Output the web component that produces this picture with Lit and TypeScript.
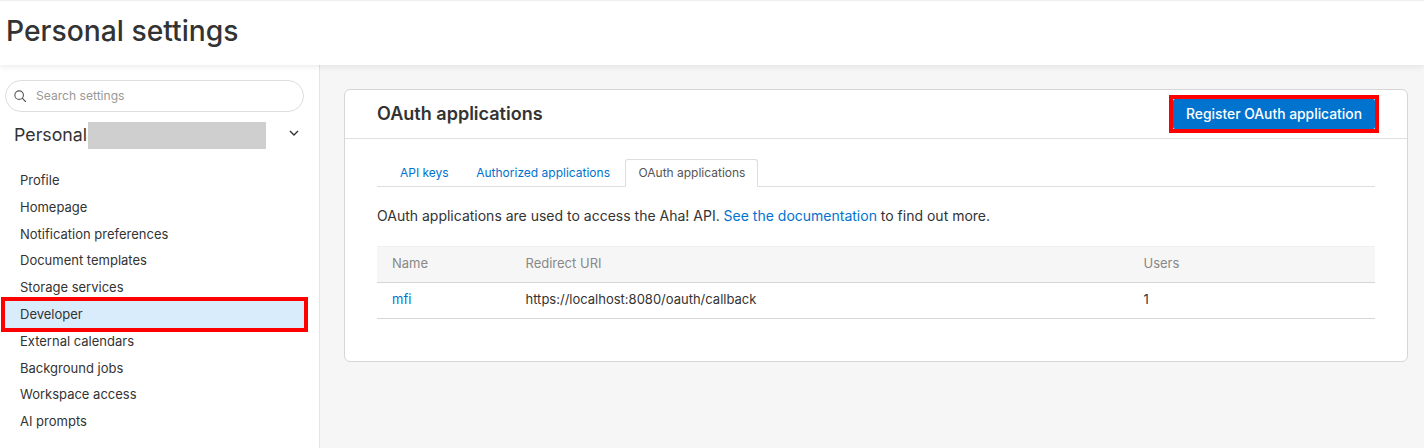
import { LitElement, html, css } from "lit";
import { customElement } from "lit/decorators.js";

const NAV = ["Profile","Homepage","Notification preferences","Document templates","Storage services","Developer","External calendars","Background jobs","Workspace access","AI prompts"];

@customElement("app-root")
export class AppRoot extends LitElement {
  static styles = css`
    :host { display: block; width: 1424px; height: 448px; overflow: hidden; font-family: Inter, "Liberation Sans", sans-serif; color: #333; background: #f6f6f6; }
    * { box-sizing: border-box; }
    .header { height: 65px; background: #fff; border-top: 1px solid #eee; box-shadow: 0 2px 6px rgba(0,0,0,.08); position: relative; display: flex; align-items: center; padding: 0 6px 4px; }
    h1 { margin: 0; font-size: 28.25px; font-weight: 500; line-height: 34px; color: #333; }
    .body { display: flex; height: 383px; }
    .side { width: 320px; background: #fff; border-right: 1px solid #e4e4e4; padding: 15px 0 0; flex: none; }
    .search { margin-left: 5px; width: 299px; height: 32px; border: 1px solid #ddd; border-radius: 16px; display: flex; align-items: center; padding: 0 0 1px 8px; gap: 10px; color: #999; font-size: 12.1px; }
    .search svg { flex: none; }
    .account { display: flex; align-items: center; margin: 10px 0 0 14px; height: 27px; font-size: 17.8px; color: #333; }
    .account-name { padding-bottom: 2px; }
    .redact { width: 178px; height: 27px; background: #cfcfcf; margin-left: 1px; }
    .chev { margin-left: 23px; margin-top: -4px; }
    .nav { margin: 17.7px 0 0; padding: 0; list-style: none; font-size: 13px; }
    .nav li { height: 26.8px; display: flex; align-items: center; padding-left: 20px; color: #333; }
    .nav li.active { background: #d9ecfc; border: 4px solid #f00; margin: -4.1px 11px -4.1px 1px; height: 35px; padding-left: 15px; width: 307px; position: relative; }
    .main { flex: 1; padding: 24px 16px 0 24px; }
    .card { height: 273px; background: #fff; border: 1px solid #d6d6d6; border-radius: 6px; }
    .card-head { height: 49px; border-bottom: 1px solid #e0e0e0; display: flex; align-items: center; justify-content: space-between; padding: 0 28px 0 32px; }
    h2 { margin: 0 0 1px; font-size: 18.05px; font-weight: 600; color: #333; }
    .btn-frame { width: 210px; height: 38px; border: 4px solid #f00; background: #fff; }
    .btn { width: 100%; height: 100%; border: 0; border-radius: 2px; background: #0073cf; color: #fff; font: 500 13.85px Inter, "Liberation Sans", sans-serif; padding: 0; display: flex; align-items: center; justify-content: center; }
    .content { padding: 20px 32px 0; }
    .tabs { display: flex; height: 28px; border-bottom: 1px solid #ddd; padding-left: 10px; font-size: 12px; }
    .tab { padding: 0 13px 1px; display: flex; align-items: center; color: #0073cf; height: 28px; margin-right: 2px; }
    .tab.first { margin-right: 1.5px; }
    .tab.second { margin-right: 2.5px; }
    .tab.active { color: #555; background: #fff; border: 1px solid #ddd; border-bottom-color: #fff; border-radius: 3px 3px 0 0; margin-right: 0; padding: 0 12px 1px; }
    p { margin: 19px 0 0; font-size: 14px; line-height: 20px; color: #333; }
    a { color: #0073cf; text-decoration: none; }
    .table { margin-top: 20px; font-size: 13px; }
    .row { display: grid; grid-template-columns: 133.5px 618px 1fr; align-items: center; padding: 0 0 3px 15px; height: 36px; border-bottom: 1px solid #d6d6d6; }
    .row.th { background: #f6f6f6; color: #888; border-top: 1px solid #f0f0f0; height: 37px; padding-bottom: 3px; }
  `;

  render() {
    return html`
      <div class="header"><h1>Personal settings</h1></div>
      <div class="body">
        <aside class="side">
          <div class="search">
            <svg width="12" height="12" viewBox="0 0 14 14" fill="none" stroke="#555" stroke-width="1.3"><circle cx="6" cy="6" r="5"/><path d="M9.6 9.6L13.4 13.4" stroke-linecap="round"/></svg>
            <span>Search settings</span>
          </div>
          <div class="account">
            <span class="account-name">Personal</span><span class="redact"></span>
            <svg class="chev" width="10" height="7" viewBox="0 0 10 7" fill="none" stroke="#333" stroke-width="1.4"><path d="M1 1l4 4 4-4"/></svg>
          </div>
          <ul class="nav">
            ${NAV.map((n) => html`<li class=${n === "Developer" ? "active" : ""}>${n}</li>`)}
          </ul>
        </aside>
        <main class="main">
          <section class="card">
            <div class="card-head">
              <h2>OAuth applications</h2>
              <div class="btn-frame"><button class="btn">Register OAuth application</button></div>
            </div>
            <div class="content">
              <div class="tabs">
                <span class="tab first">API keys</span>
                <span class="tab second">Authorized applications</span>
                <span class="tab active">OAuth applications</span>
              </div>
              <p>OAuth applications are used to access the Aha! API. <a href="#">See the documentation</a> to find out more.</p>
              <div class="table">
                <div class="row th"><span>Name</span><span>Redirect URI</span><span>Users</span></div>
                <div class="row"><a href="#">mfi</a><span>https://localhost:8080/oauth/callback</span><span>1</span></div>
              </div>
            </div>
          </section>
        </main>
      </div>
    `;
  }
}
